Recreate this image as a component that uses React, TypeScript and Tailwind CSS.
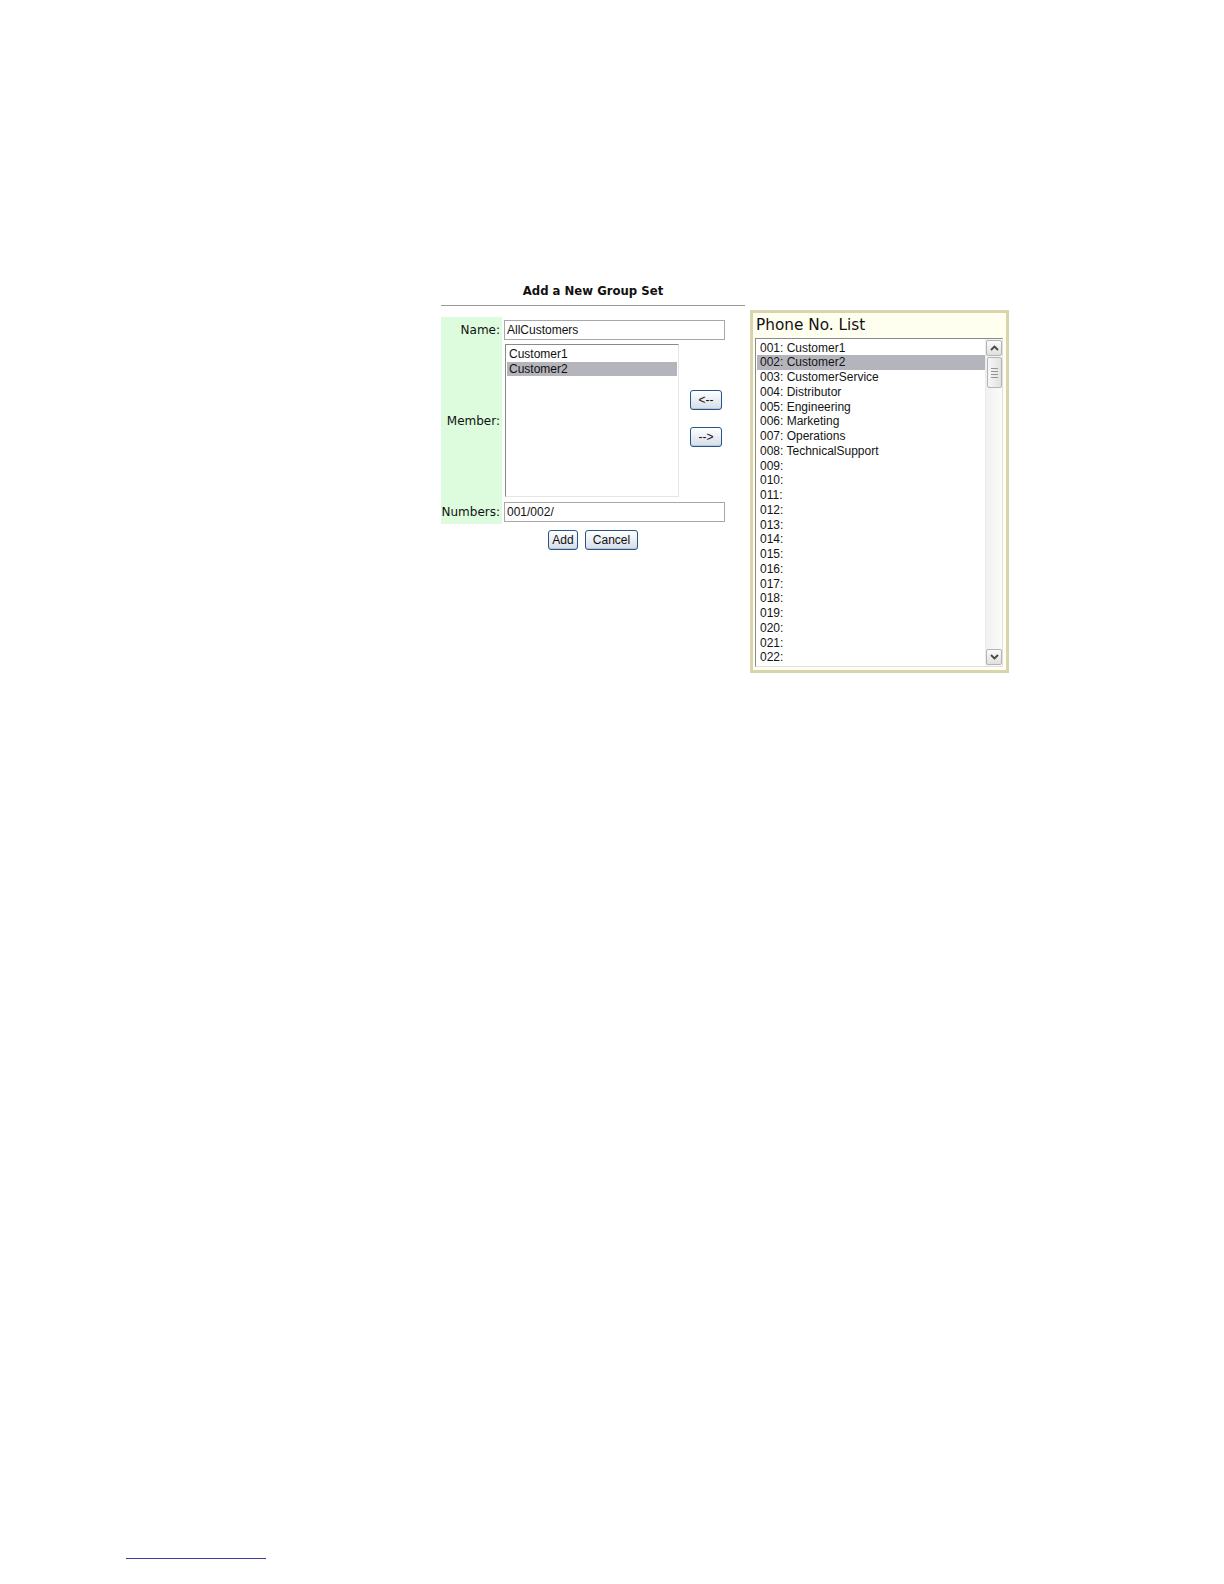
import React from "react";

const verdana = { fontFamily: '"DejaVu Sans", Verdana, sans-serif' };
const arial = { fontFamily: '"Liberation Sans", Arial, sans-serif' };

function XpButton({ label, w }: { label: string; w: string }) {
  return (
    <div
      className={`${w} h-[20px] border border-[#25548c] rounded-[3px] bg-gradient-to-b from-[#ffffff] to-[#d6dde8] flex items-center justify-center text-[12px] text-[#111] shadow-[inset_0_-1px_0_#bcc6d4]`}
      style={arial}
    >
      {label}
    </div>
  );
}

function ArrowBtn({ dir }: { dir: "up" | "down" }) {
  return (
    <div className="w-[16px] h-[16px] mx-auto border border-[#b4b4b4] rounded-[2px] bg-gradient-to-b from-[#fbfbfb] to-[#e0e0e0] flex items-center justify-center">
      <svg width="9" height="6" viewBox="0 0 9 6">
        {dir === "up" ? (
          <path d="M1 5 L4.5 1.5 L8 5" fill="none" stroke="#474747" strokeWidth="1.8" />
        ) : (
          <path d="M1 1 L4.5 4.5 L8 1" fill="none" stroke="#474747" strokeWidth="1.8" />
        )}
      </svg>
    </div>
  );
}

export default function App() {
  const names = [
    "Customer1",
    "Customer2",
    "CustomerService",
    "Distributor",
    "Engineering",
    "Marketing",
    "Operations",
    "TechnicalSupport",
  ];
  const items = Array.from({ length: 22 }, (_, i) => {
    const n = String(i + 1).padStart(3, "0");
    return `${n}: ${names[i] ?? ""}`;
  });

  return (
    <div className="w-[1224px] h-[1584px] bg-white flex flex-col">
      <div className="flex pl-[441px] pt-[284px]">
        {/* Left column */}
        <div className="w-[304px] flex flex-col">
          <div
            className="h-[14px] leading-[14px] text-center font-bold text-[11.7px] text-[#111]"
            style={verdana}
          >
            Add a New Group Set
          </div>
          <div className="mt-[7px] h-px bg-[#9a9a9a]" />
          <div className="mt-[11px] flex flex-col">
            {/* Name row */}
            <div className="flex h-[25px]">
              <div
                className="w-[61px] bg-[#ddfcdd] flex items-center justify-end pr-[2px] pt-[1px] text-[12px] text-[#111]"
                style={verdana}
              >
                Name:
              </div>
              <div className="pl-[2px] pt-[3px]">
                <div
                  className="w-[221px] h-[20px] border border-[#a8a8a8] flex items-center pl-[2px] text-[12px] text-[#111]"
                  style={arial}
                >
                  AllCustomers
                </div>
              </div>
            </div>
            {/* Member row */}
            <div className="flex h-[158px]">
              <div
                className="w-[61px] bg-[#ddfcdd] flex items-center justify-end pr-[2px] text-[12px] text-[#111]"
                style={verdana}
              >
                Member:
              </div>
              <div className="pl-[3px] pt-[2px] flex">
                <div className="w-[174px] h-[153px] border border-t-[#8a8a8a] border-l-[#8a8a8a] border-r-[#e6e6e6] border-b-[#e6e6e6] pt-[2px] px-[1px]">
                  <div className="text-[12px] leading-[15px] pl-[2px] text-[#111]" style={arial}>
                    Customer1
                  </div>
                  <div
                    className="text-[12px] leading-[14px] h-[14px] pl-[2px] bg-[#b4b4bc] text-[#111]"
                    style={arial}
                  >
                    Customer2
                  </div>
                </div>
                <div className="ml-[11px] pt-[46px] flex flex-col gap-[17px]">
                  <XpButton label="<--" w="w-[32px]" />
                  <XpButton label="-->" w="w-[32px]" />
                </div>
              </div>
            </div>
            {/* Numbers row */}
            <div className="flex h-[24px]">
              <div
                className="w-[61px] bg-[#ddfcdd] flex items-center justify-end pr-[2px] text-[12px] text-[#111]"
                style={verdana}
              >
                Numbers:
              </div>
              <div className="pl-[2px] pt-[2px]">
                <div
                  className="w-[221px] h-[20px] border border-[#a8a8a8] flex items-center pl-[2px] text-[12px] text-[#111]"
                  style={arial}
                >
                  001/002/
                </div>
              </div>
            </div>
            <div className="mt-[6px] flex justify-center gap-[7px]">
              <XpButton label="Add" w="w-[30px]" />
              <XpButton label="Cancel" w="w-[53px]" />
            </div>
          </div>
        </div>

        {/* Right panel */}
        <div className="ml-[5px] mt-[26px] w-[259px] h-[363px] border-[3px] border-[#d8d4ae] bg-[#fffff0] flex flex-col px-[2px]">
          <div
            className="h-[25px] pl-[1px] flex items-center text-[15.3px] text-[#111]"
            style={verdana}
          >
            Phone No. List
          </div>
          <div className="w-[248px] h-[329px] border border-t-[#8a8a8a] border-l-[#8a8a8a] border-r-[#e0e0e0] border-b-[#e0e0e0] bg-white flex">
            <div className="flex-1 pt-[1.5px] pl-[1px] overflow-hidden">
              {items.map((t, i) => (
                <div
                  key={t}
                  className={`text-[12px] leading-[14.76px] h-[14.76px] pl-[3px] text-[#141414] whitespace-pre ${
                    i === 1 ? "bg-[#b4b4bc]" : ""
                  }`}
                  style={arial}
                >
                  {t}
                </div>
              ))}
            </div>
            <div className="w-[17px] bg-gradient-to-r from-[#f1f1ef] to-[#fbfbfa] border-l border-[#ececec] flex flex-col pt-[1px] pb-[1px]">
              <ArrowBtn dir="up" />
              <div className="mt-[1px] mx-auto w-[15px] h-[31px] border border-[#b4b4b4] rounded-[2px] bg-gradient-to-r from-[#f6f6f6] to-[#e2e2e2] flex flex-col items-center justify-center gap-[2px]">
                <div className="w-[7px] h-px bg-[#949494]" />
                <div className="w-[7px] h-px bg-[#949494]" />
                <div className="w-[7px] h-px bg-[#949494]" />
                <div className="w-[7px] h-px bg-[#949494]" />
              </div>
              <div className="flex-1" />
              <ArrowBtn dir="down" />
            </div>
          </div>
        </div>
      </div>

      <div className="mt-auto mb-[25px] ml-[126px] w-[140px] h-px bg-[#3c3c9c]" />
    </div>
  );
}
